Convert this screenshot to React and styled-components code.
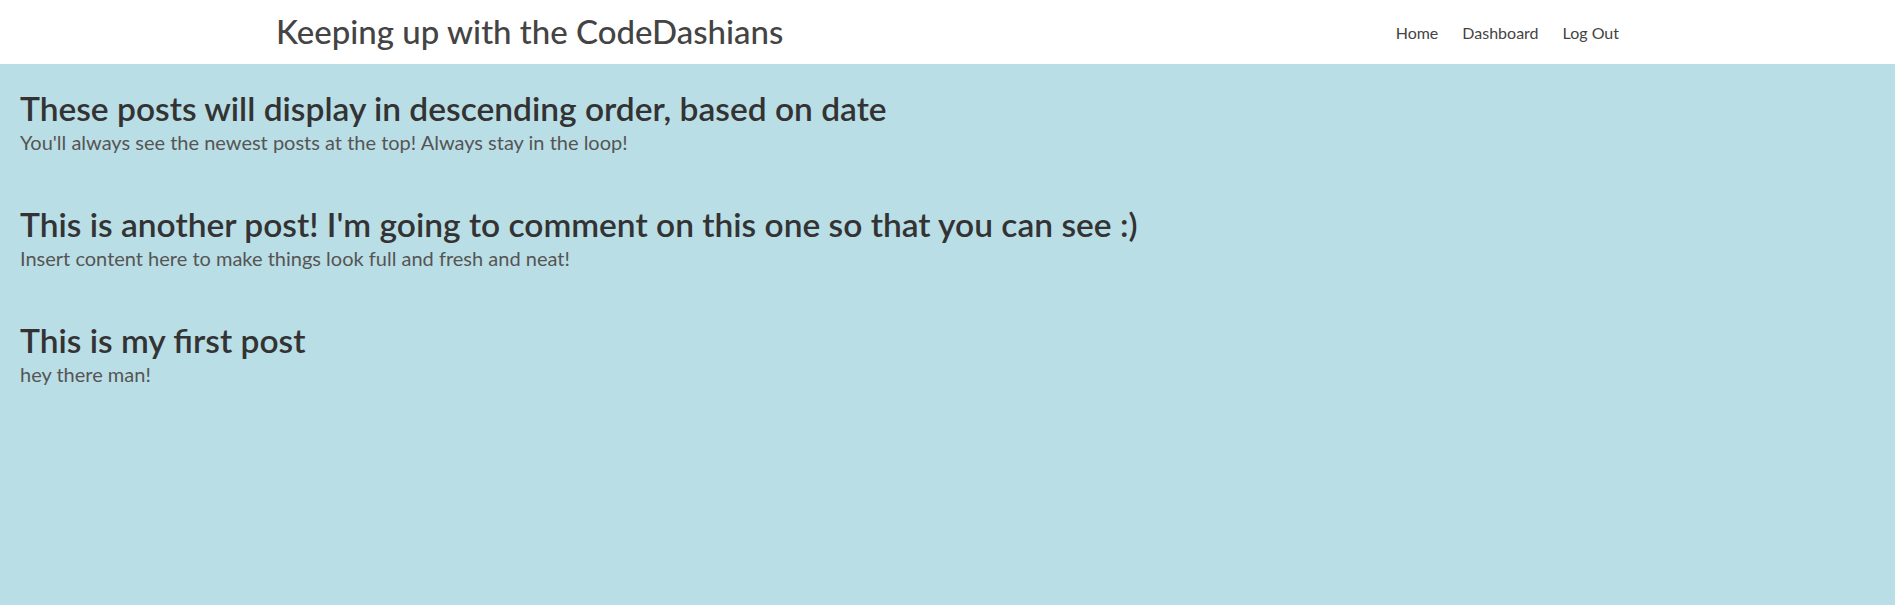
import React from 'react';
import styled, { createGlobalStyle } from 'styled-components';

const GlobalStyle = createGlobalStyle`
  html, body {
    margin: 0;
    padding: 0;
    background: #badee6;
    font-family: Lato, "Noto Sans", sans-serif;
  }
`;

const posts = [
  {
    title: 'These posts will display in descending order, based on date',
    body: "You'll always see the newest posts at the top! Always stay in the loop!",
  },
  {
    title: "This is another post! I'm going to comment on this one so that you can see :)",
    body: 'Insert content here to make things look full and fresh and neat!',
  },
  {
    title: 'This is my first post',
    body: 'hey there man!',
  },
];

const App = () => {
  return (
    <>
      <GlobalStyle />
      <Header>
        <Brand>Keeping up with the CodeDashians</Brand>
        <Nav>
          <NavLink href="#">Home</NavLink>
          <NavLink href="#">Dashboard</NavLink>
          <NavLink href="#">Log Out</NavLink>
        </Nav>
      </Header>
      <Main>
        {posts.map((post) => (
          <Post key={post.title}>
            <PostTitle>{post.title}</PostTitle>
            <PostBody>{post.body}</PostBody>
          </Post>
        ))}
      </Main>
    </>
  );
};

export default App;

const Header = styled.header`
  height: 64px;
  background: #fff;
  display: flex;
  align-items: center;
  justify-content: space-between;
  padding: 0 276px;
`;

const Brand = styled.h1`
  margin: 0;
  font-size: 33px;
  font-weight: 500;
  color: #444;
  line-height: 1;
  padding-bottom: 1px;
`;

const Nav = styled.nav`
  display: flex;
  gap: 24px;
`;

const NavLink = styled.a`
  font-size: 16px;
  color: #444;
  text-decoration: none;
`;

const Main = styled.main`
  padding: 25px 20px 40px;
  min-height: 500px;
`;

const Post = styled.article`
  margin-bottom: 48px;
`;

const PostTitle = styled.h2`
  margin: 0;
  font-size: 33.5px;
  font-weight: 600;
  line-height: 38px;
  color: #333;
`;

const PostBody = styled.p`
  margin: 0;
  font-size: 20px;
  line-height: 30px;
  color: #555;
`;
